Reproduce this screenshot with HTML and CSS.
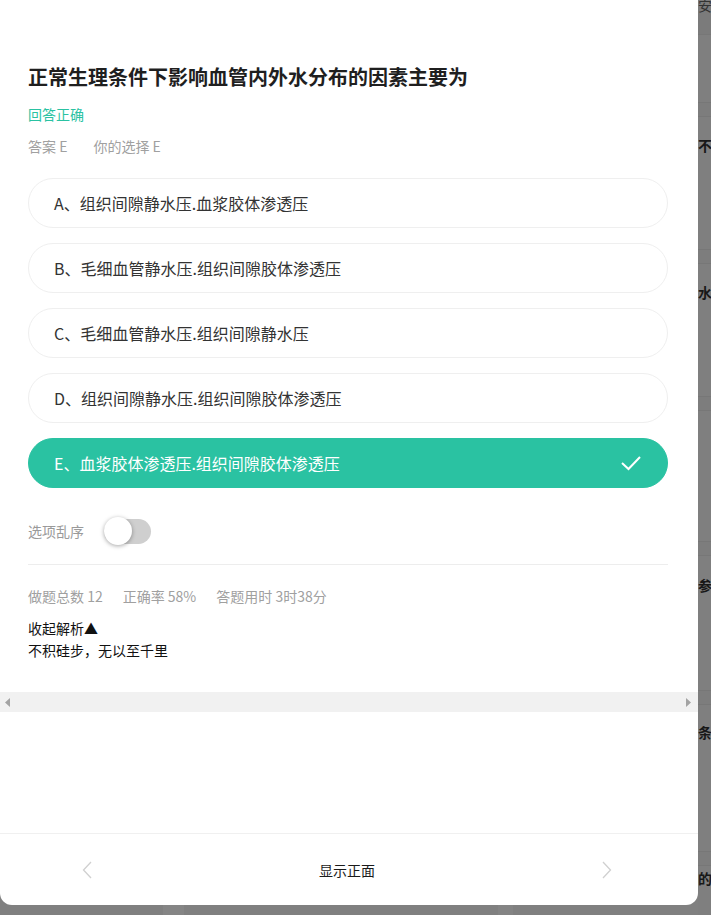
FILE: index.html
```html
<!DOCTYPE html>
<html lang="zh-CN">
<head>
<meta charset="utf-8">
<title>题目详情</title>
<link rel="stylesheet" href="styles.css">
</head>
<body>
<div class="screen">
  <div class="modal-col">
    <div class="modal">
      <div class="body">
        <h1 class="title">正常生理条件下影响血管内外水分布的因素主要为</h1>
        <div class="result">回答正确</div>
        <div class="answer"><span>答案 E</span><span>你的选择 E</span></div>
        <ul class="options">
          <li class="option">A、组织间隙静水压.血浆胶体渗透压</li>
          <li class="option">B、毛细血管静水压.组织间隙胶体渗透压</li>
          <li class="option">C、毛细血管静水压.组织间隙静水压</li>
          <li class="option">D、组织间隙静水压.组织间隙胶体渗透压</li>
          <li class="option option-right">E、血浆胶体渗透压.组织间隙胶体渗透压
            <svg class="check" width="22" height="16" viewBox="0 0 22 16"><polyline points="2,8 8.5,14 20,2" fill="none" stroke="#fff" stroke-width="2"/></svg>
          </li>
        </ul>
        <div class="shuffle">
          <span>选项乱序</span>
          <span class="toggle"><span class="knob"></span></span>
        </div>
        <div class="stats"><span>做题总数 12</span><span>正确率 58%</span><span>答题用时 3时38分</span></div>
        <div class="fold">收起解析▲</div>
        <div class="analysis">不积硅步，无以至千里</div>
      </div>
      <div class="hscroll">
        <svg width="6" height="9" viewBox="0 0 6 9"><polygon points="5,0 5,9 0,4.5" fill="#a3a3a3"/></svg>
        <svg width="6" height="9" viewBox="0 0 6 9"><polygon points="1,0 1,9 6,4.5" fill="#a3a3a3"/></svg>
      </div>
      <div class="footer">
        <svg width="10" height="18" viewBox="0 0 10 18"><polyline points="9,1 1.5,9 9,17" fill="none" stroke="#d0d0d0" stroke-width="1.3"/></svg>
        <span class="flip">显示正面</span>
        <svg width="10" height="18" viewBox="0 0 10 18"><polyline points="1,1 8.5,9 1,17" fill="none" stroke="#d0d0d0" stroke-width="1.3"/></svg>
      </div>
    </div>
    <div class="under">
      <span class="u1"></span><span class="lt1"></span><span class="u2"></span><span class="lt2"></span><span class="u3"></span>
    </div>
  </div>
  <div class="side">
    <div class="s-top"><span class="frag">安徽</span></div>
    <div class="s-gap h68"></div>
    <div class="s-row h15"></div>
    <div class="s-card h132"><span class="frag f1">不求</span></div>
    <div class="s-row h15"></div>
    <div class="s-card h132"><span class="frag f2">水分</span></div>
    <div class="s-row h15"></div>
    <div class="s-card h130"></div>
    <div class="s-row h15"></div>
    <div class="s-card h134"><span class="frag f3">参透</span></div>
    <div class="s-row h15"></div>
    <div class="s-card h146"><span class="frag f4">条件</span></div>
    <div class="s-row h15"></div>
    <div class="s-card h60"><span class="frag f5">的因</span></div>
  </div>
</div>
</body>
</html>
```

FILE: styles.css
```css
* { box-sizing: border-box; }
html, body { margin: 0; padding: 0; }
body {
  width: 711px;
  height: 915px;
  overflow: hidden;
  background: #808080;
  font-family: "Noto Sans CJK SC", "Noto Sans", sans-serif;
}
.screen {
  display: flex;
  height: 915px;
}
.modal-col {
  width: 698px;
  display: flex;
  flex-direction: column;
}
.modal {
  width: 698px;
  height: 905px;
  background: #fff;
  border-radius: 0 0 12px 12px;
  display: flex;
  flex-direction: column;
  overflow: hidden;
}
.body {
  padding: 63px 30px 0 28px;
}
.title {
  margin: 0;
  font-size: 20px;
  line-height: 28px;
  font-weight: 700;
  color: #1f1f1f;
}
.result {
  margin-top: 13px;
  font-size: 14px;
  line-height: 20px;
  color: #2ac2a2;
}
.answer {
  margin-top: 12px;
  font-size: 14px;
  line-height: 20px;
  color: #a0a0a0;
  display: flex;
  gap: 26px;
}
.options {
  list-style: none;
  margin: 22px 0 0;
  padding: 0;
  display: flex;
  flex-direction: column;
  gap: 15px;
}
.option {
  height: 50px;
  border: 1px solid #efefef;
  border-radius: 25px;
  padding: 0 25px 1px 25px;
  display: flex;
  align-items: center;
  justify-content: space-between;
  font-size: 16px;
  color: #333;
}
.option-right {
  background: #2ac2a2;
  border-color: #2ac2a2;
  color: #fff;
}
.shuffle {
  margin-top: 30px;
  height: 26px;
  display: flex;
  align-items: center;
  gap: 20px;
  font-size: 14px;
  color: #9a9a9a;
}
.toggle {
  width: 47px;
  height: 25px;
  border-radius: 13px;
  background: #cfcfcf;
  display: flex;
  align-items: center;
}
.knob {
  width: 28px;
  height: 28px;
  border-radius: 50%;
  background: #fff;
  box-shadow: 0 1px 4px rgba(0,0,0,0.35);
}
.stats {
  margin-top: 20px;
  border-top: 1px solid #ededed;
  padding-top: 21px;
  font-size: 14px;
  line-height: 20px;
  color: #a0a0a0;
  display: flex;
  gap: 20px;
}
.fold {
  margin-top: 11px;
  font-size: 14px;
  line-height: 22px;
  color: #111;
}
.analysis {
  font-size: 14px;
  line-height: 22px;
  color: #111;
}
.hscroll {
  margin-top: 31px;
  height: 20px;
  background: #f1f1f1;
  display: flex;
  align-items: center;
  justify-content: space-between;
  padding: 0 7px 0 5px;
}
.footer {
  margin-top: auto;
  height: 72px;
  border-top: 1px solid #f0f0f0;
  display: flex;
  align-items: center;
  justify-content: space-between;
  padding: 0 86px 0 82px;
}
.flip {
  font-size: 14px;
  color: #1a1a1a;
}
.under {
  flex: 1;
  display: flex;
}
.u1 { width: 163px; }
.lt1 { width: 21px; background: #858585; }
.u2 { width: 314px; }
.lt2 { width: 15px; background: #848484; }
.u3 { flex: 1; }
.side {
  flex: 1;
  overflow: hidden;
  display: flex;
  flex-direction: column;
  background: #7f7f7f;
}
.side > div { flex: none; overflow: hidden; }
.s-top {
  height: 35px;
  background: #7b7b7b;
  border-bottom: 1px solid #777;
}
.frag {
  display: block;
  white-space: nowrap;
  font-size: 14px;
  line-height: 18px;
  font-weight: 700;
  color: #181818;
}
.s-top .frag { margin-top: -4px; font-weight: 400; color: #333; }
.s-row { border-top: 1px solid #777; border-bottom: 1px solid #777; background: #7d7d7d; }
.h15 { height: 15px; }
.h68 { height: 67px; }
.h132 { height: 132px; }
.h130 { height: 130px; }
.h134 { height: 134px; }
.h146 { height: 146px; }
.h60 { height: 60px; }
.f1 { margin-top: 19px; }
.f2 { margin-top: 19px; }
.f3 { margin-top: 20px; }
.f4 { margin-top: 18px; }
.f5 { margin-top: 3px; }
```
